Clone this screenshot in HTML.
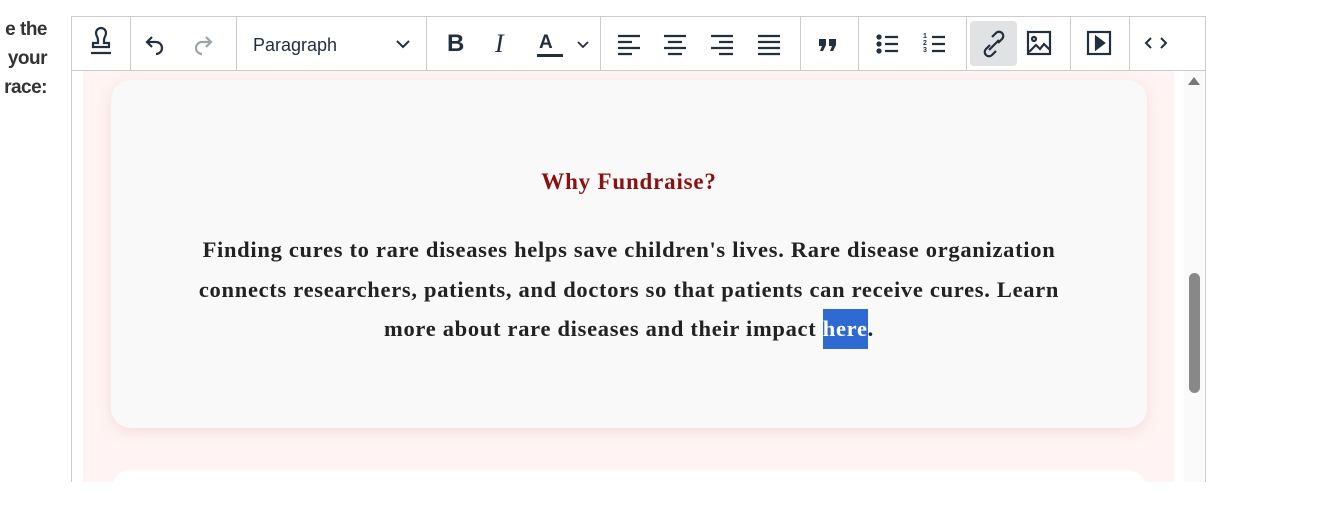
<!DOCTYPE html>
<html><head><style>
body{margin:0;width:1331px;height:482px;overflow:hidden;background:#fff;font-family:"Liberation Sans",sans-serif;position:relative}
.lbl{position:absolute;right:1284px;font-weight:bold;font-size:19px;color:#333;text-align:right;line-height:29px;top:15px;white-space:nowrap;letter-spacing:-0.5px}
.tb{position:absolute;left:71px;top:16px;width:1133px;height:53px;border:1px solid #ccc;background:#fff}
.sep{position:absolute;top:0;width:1px;height:53px;background:#ccc}
.frame{position:absolute;left:71px;top:70px;width:1133px;height:412px;border-left:1px solid #ccc;border-right:1px solid #ccc}
.pink{position:absolute;left:83px;top:70px;width:1091px;height:412px;background:#fff4f3}
.card{position:absolute;left:111px;top:80px;width:1036px;height:348px;background:#f9f9f9;border-radius:20px;box-shadow:0 4px 14px rgba(220,180,180,.35)}
.card2{position:absolute;left:111px;top:470px;width:1036px;height:40px;background:#fff;border-radius:20px}
.sb{position:absolute;left:1184px;top:70px;width:20px;height:412px;background:#fafafa}
.thumb{position:absolute;left:1189px;top:273px;width:11px;height:120px;background:#888;border-radius:6px}
h2{position:absolute;left:0;width:1036px;top:89px;margin:0;text-align:center;font-family:"Liberation Serif",serif;font-weight:bold;font-size:23px;letter-spacing:0.8px;color:#8b1010}
p{position:absolute;left:80px;width:876px;top:150px;margin:0;text-align:center;font-family:"Liberation Serif",serif;font-weight:bold;font-size:22.5px;line-height:39.5px;letter-spacing:0.7px;color:#222}
.hl{background:#2f6ad3;color:#fff;padding:7px 0 8px}
</style></head><body>
<div class="lbl">e the<br>your<br>race:</div>
<div class="frame"></div>
<div class="pink"></div>
<div class="sb"><div style="position:absolute;left:4px;top:7px;border-left:6px solid transparent;border-right:6px solid transparent;border-bottom:8px solid #777"></div></div>
<div class="thumb"></div>
<div class="card">
<h2>Why Fundraise?</h2>
<p>Finding cures to rare diseases helps save children's lives. Rare disease organization connects researchers, patients, and doctors so that patients can receive cures. Learn more about rare diseases and their impact <span class="hl">here</span>.</p>
</div>
<div class="card2"></div>
<div class="tb">
<div class="sep" style="left:58px"></div><div class="sep" style="left:164px"></div><div class="sep" style="left:354px"></div><div class="sep" style="left:528px"></div><div class="sep" style="left:728px"></div><div class="sep" style="left:786px"></div><div class="sep" style="left:894px"></div><div class="sep" style="left:998px"></div><div class="sep" style="left:1057px"></div>
<div style="position:absolute;left:898px;top:4px;width:47px;height:45px;background:#e1e2e4;border-radius:4px"></div>
<svg width="1133" height="53" style="position:absolute;left:0;top:0" fill="none" stroke="#222f3e" stroke-width="2.2">
<path d="M24 16a5 5 0 0 1 10 0c0 3-2 4-2 7v3h5v4H21v-4h5v-3c0-3-2-4-2-7zM19 36h20"/>
<path d="M80 20l-5 5 5 5M75 25h9a6 6 0 0 1 0 12"/>
<path stroke="#9ba3ab" d="M134 20l5 5-5 5M139 25h-9a6 6 0 0 0 0 12"/>
<path d="M325 24l6 6 6-6" stroke-width="2"/>
<path d="M506 25l5 5 5-5" stroke-width="1.8"/>
<path stroke-width="2.2" d="M546 19h22M546 25h14M546 31h22M546 37h14"/>
<path stroke-width="2.2" d="M592 19h22M596 25h14M592 31h22M596 37h14"/>
<path stroke-width="2.2" d="M639 19h22M647 25h14M639 31h22M647 37h14"/>
<path stroke-width="2.2" d="M686 19h22M686 25h22M686 31h22M686 37h22"/>
<path stroke="none" fill="#222f3e" d="M747 22h7v6l-3 6h-3l2-5h-3zM757 22h7v6l-3 6h-3l2-5h-3z"/>
<path stroke-width="2.2" d="M813 20h13M813 27h13M813 34h13"/>
<circle cx="807" cy="20" r="1.5" fill="#222f3e"/><circle cx="807" cy="27" r="1.5" fill="#222f3e"/><circle cx="807" cy="34" r="1.5" fill="#222f3e"/>
<path stroke-width="2.2" d="M860 20h13M860 27h13M860 34h13"/>
<path d="M918 28l-4 4a4 4 0 0 0 6 6l4-4M926 26l4-4a4 4 0 0 0-6-6l-4 4M917 33l10-10"/>
<rect x="956" y="15" width="22" height="22"/><circle cx="962" cy="22" r="2"/><path d="M957 35l7-7 4 4 4-5 6 6"/>
<rect x="1016" y="15" width="22" height="22"/><path d="M1024 20v12l8-6z" fill="#222f3e"/>
<path d="M1079 21l-5 5 5 5M1089 21l5 5-5 5" stroke-width="2"/>
</svg>
<div style="position:absolute;left:181px;top:18px;font-size:18px;color:#222f3e">Paragraph</div>
<div style="position:absolute;left:375px;top:13px;font-size:24px;font-weight:bold;color:#222f3e">B</div>
<div style="position:absolute;left:423px;top:12px;font-size:26px;font-style:italic;font-family:'Liberation Serif',serif;color:#222f3e">I</div>
<div style="position:absolute;left:467px;top:15px;font-size:19px;font-weight:bold;color:#222f3e">A</div>
<div style="position:absolute;left:465px;top:37px;width:26px;height:3px;background:#222f3e"></div>
<div style="position:absolute;left:851px;top:16px;font-size:7px;line-height:7px;font-weight:bold;color:#222f3e">1<br>2<br>3</div>
</div>
</body></html>
